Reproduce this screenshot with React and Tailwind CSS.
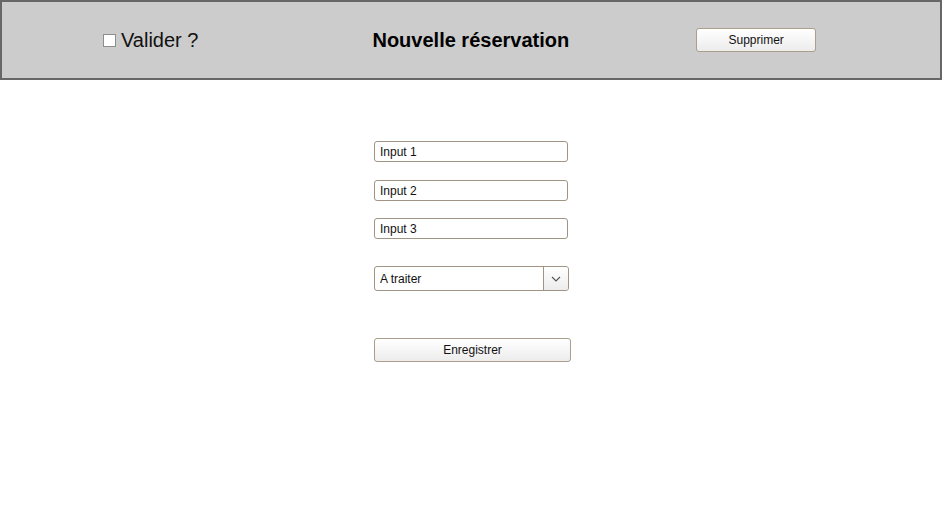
export default function App() {
  return (
    <div className="w-[942px] h-[507px] bg-white" style={{ fontFamily: '"Liberation Sans", Arial, sans-serif' }}>
      <div className="h-[80px] bg-[#cccccc] border-2 border-[#676767] flex items-center">
        <label className="ml-[101px] flex items-center text-[20px] text-[#111] leading-none">
          <span className="w-[13px] h-[13px] bg-white border border-[#8e8e8e] mr-[5px]"></span>
          Valider ?
        </label>
        <div className="ml-[174px] text-[20px] font-bold text-black leading-none">Nouvelle réservation</div>
        <button className="ml-[127px] w-[120px] h-[24px] rounded-[3px] border border-[#ab9e8c] bg-gradient-to-b from-white to-[#ececec] text-[12px] text-[#111]">
          Supprimer
        </button>
      </div>

      <div className="ml-[374px] pt-[61px] flex flex-col items-start">
        {["Input 1", "Input 2", "Input 3"].map((t, i) => (
          <div
            key={t}
            className={`w-[194px] h-[21px] rounded-[3px] border border-[#a09585] bg-white flex items-center pl-[5px] text-[12px] text-[#111] ${
              i === 0 ? "" : i === 1 ? "mt-[18px]" : "mt-[17px]"
            }`}
          >
            {t}
          </div>
        ))}

        <div className="mt-[27px] w-[195px] h-[25px] rounded-[3px] border border-[#a09585] bg-white flex text-[12px] text-[#111]">
          <div className="flex-1 flex items-center pl-[5px]">A traiter</div>
          <div className="w-[25px] border-l border-[#a09585] bg-gradient-to-b from-white to-[#ececec] rounded-r-[3px] flex items-center justify-center">
            <svg width="10" height="6" viewBox="0 0 10 6">
              <path d="M1 1 L5 5 L9 1" fill="none" stroke="#555" strokeWidth="1.1" />
            </svg>
          </div>
        </div>

        <button className="mt-[47px] w-[197px] h-[24px] rounded-[3px] border border-[#ab9e8c] bg-gradient-to-b from-white to-[#ececec] text-[12px] text-[#111]">
          Enregistrer
        </button>
      </div>
    </div>
  )
}
